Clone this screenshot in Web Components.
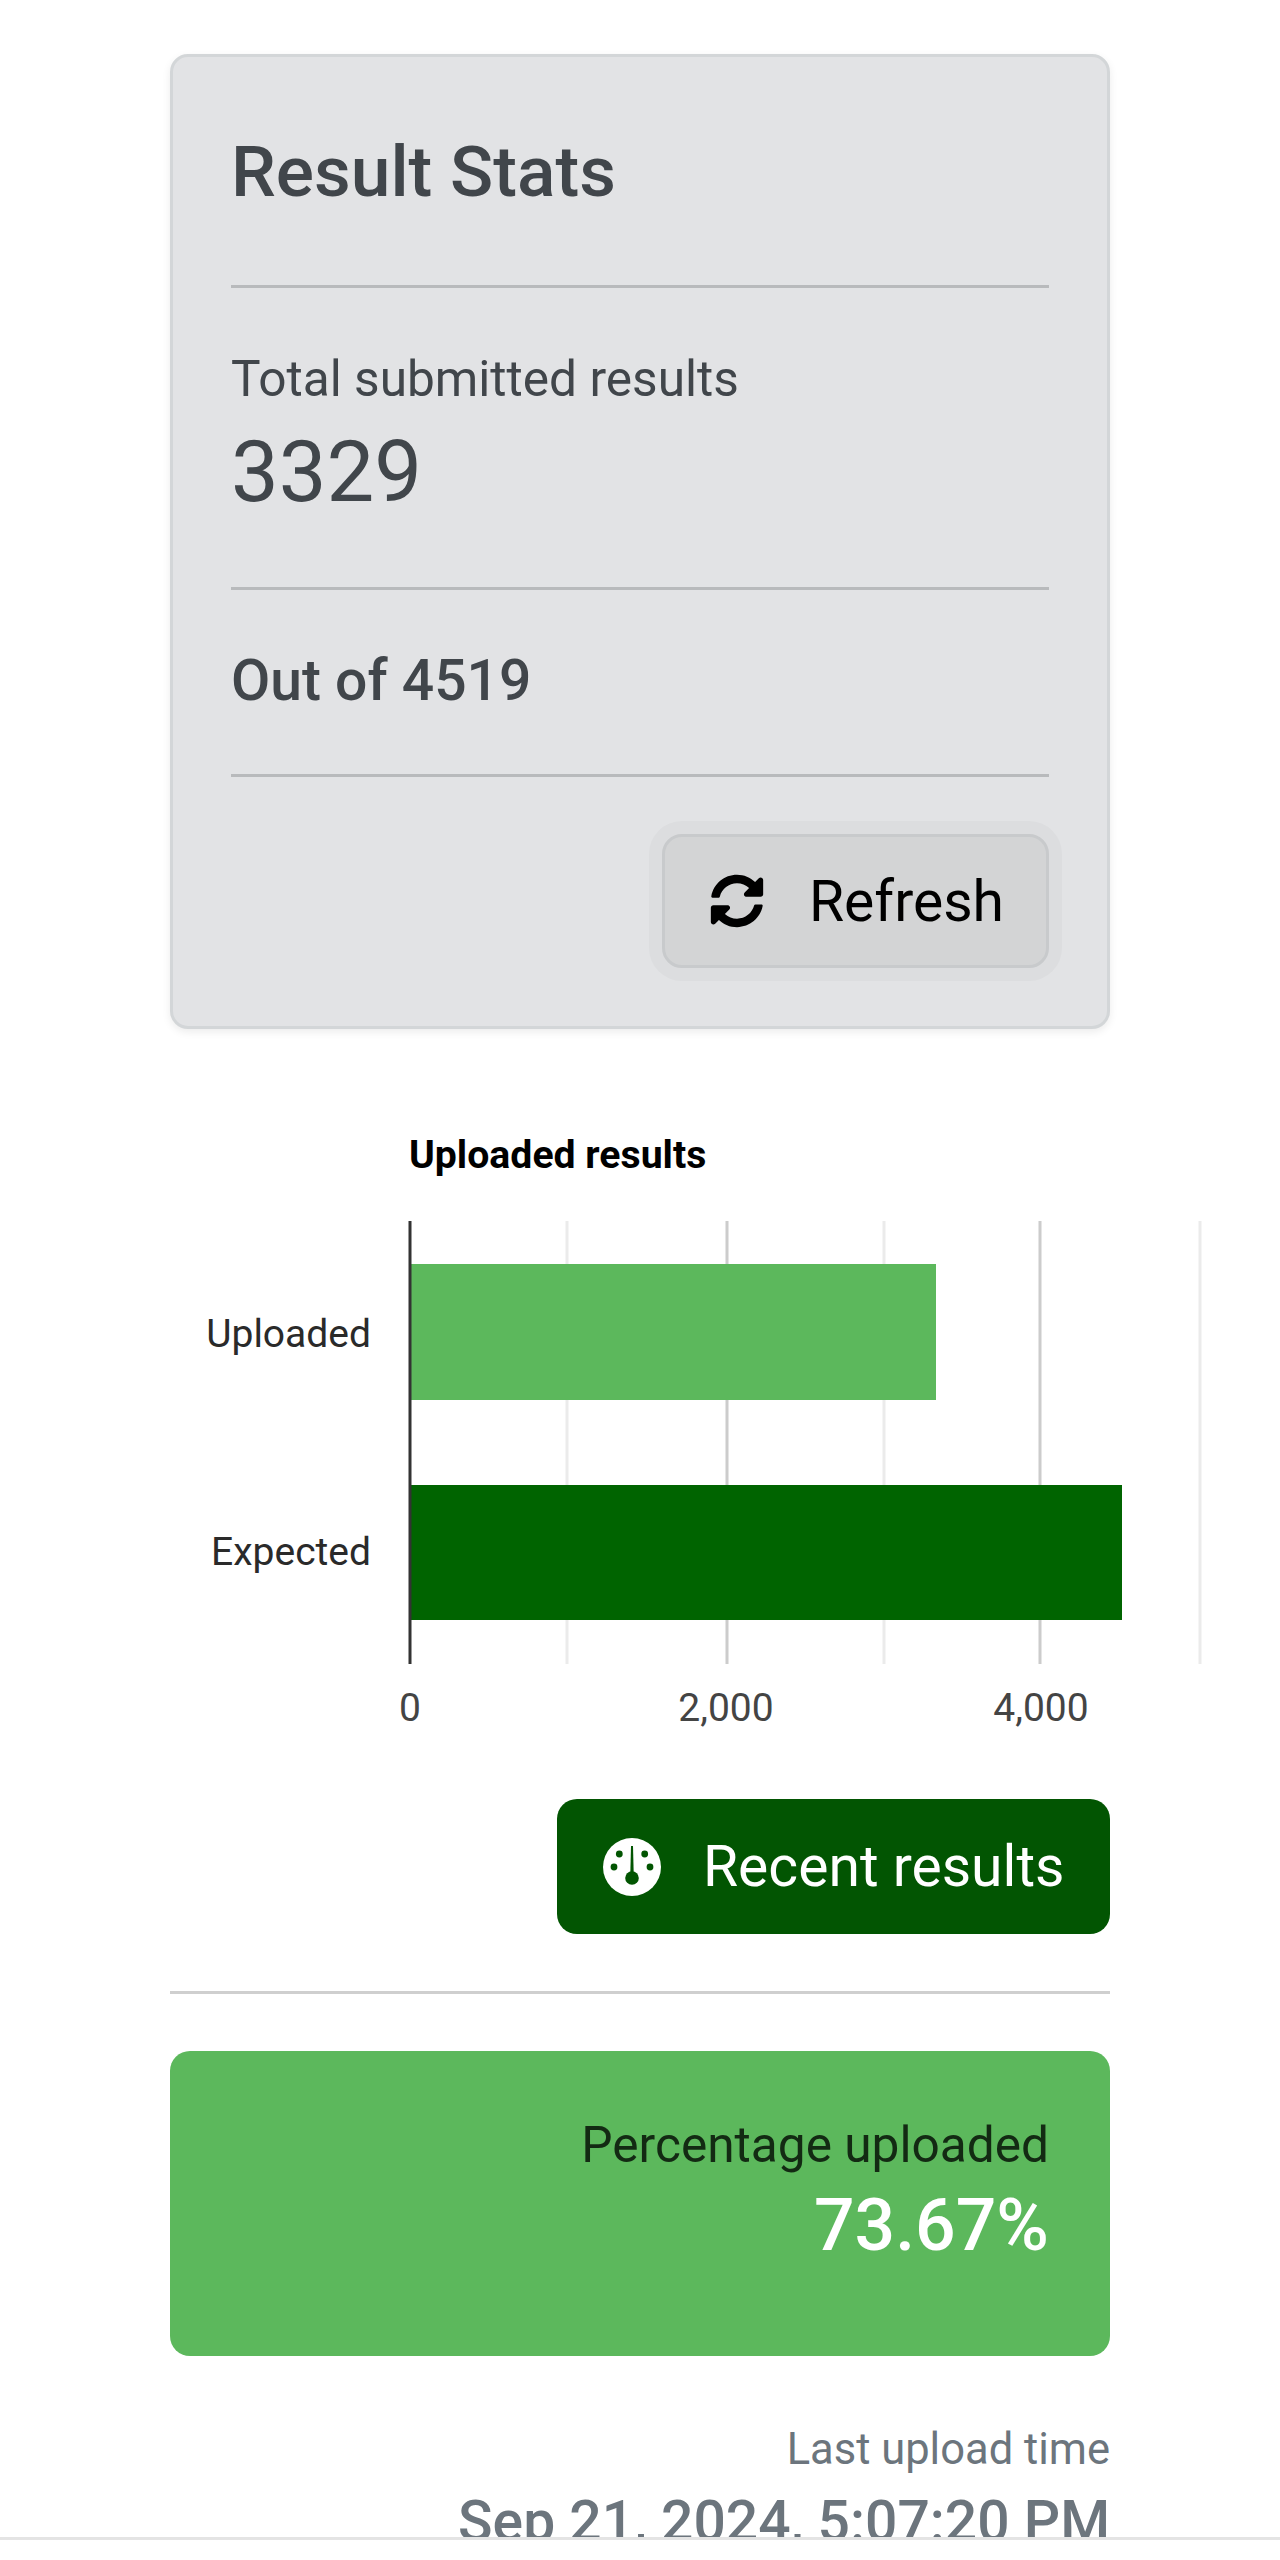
<!DOCTYPE html>
<html>
<head>
<meta charset="utf-8">
<title>Result Stats</title>
<style>
  html, body { margin: 0; padding: 0; background: #fff; }
  body { font-family: Roboto, "Liberation Sans", sans-serif; height: 2560px; overflow: hidden; }
  main { display: block; width: 940px; margin-left: 170px; padding-top: 54px; }
</style>
</head>
<body>
<main>
  <stat-card></stat-card>
  <upload-chart></upload-chart>
  <recent-button>Recent results</recent-button>
  <percent-box label="Percentage uploaded" value="73.67%"></percent-box>
  <last-upload label="Last upload time" value="Sep 21, 2024, 5:07:20 PM"></last-upload>
</main>
<bottom-bar></bottom-bar>

<script>
class StatCard extends HTMLElement {
  constructor() {
    super();
    this.attachShadow({ mode: 'open' });
  }
  connectedCallback() {
    this.shadowRoot.innerHTML = `
      <style>
        :host {
          display: block;
          box-sizing: border-box;
          height: 975px;
          padding: 57px 58px 0;
          background: #e2e3e5;
          border: 3px solid #d3d6d8;
          border-radius: 18px;
          box-shadow: 0 3px 9px rgba(0, 0, 0, 0.08);
          color: #41464b;
        }
        h3 { margin: 0 0 57px; padding-top: 2px; font-size: 71.3px; font-weight: 500; line-height: 112px; }
        hr { margin: 0; height: 3px; border: 0; background: #b8babc; }
        .label { margin-top: 55px; font-size: 49.6px; line-height: 72px; }
        .num { margin-top: 7px; font-size: 85px; line-height: 100px; }
        .out { margin-top: 48px; font-size: 57px; font-weight: 500; line-height: 86px; }
        .actions { display: flex; justify-content: flex-end; margin-top: 57px; }
        button {
          display: flex;
          align-items: center;
          box-sizing: border-box;
          height: 134px;
          width: 387px;
          padding: 0 0 0 45px;
          font: 400 57px Roboto, sans-serif;
          color: #000;
          background: #d3d4d5;
          border: 3px solid #c8cacc;
          border-radius: 20px;
          box-shadow: 0 0 0 13px #dcdddf;
        }
        svg { width: 54px; height: 54px; margin-right: 45px; flex: none; }
      </style>
      <h3>Result Stats</h3>
      <hr>
      <div class="label">Total submitted results</div>
      <div class="num">3329</div>
      <hr style="margin-top:65px">
      <div class="out">Out of 4519</div>
      <hr style="margin-top:50px">
      <div class="actions">
        <button>
          <svg viewBox="0 0 512 512"><path fill="#000" d="M370.72 133.28C339.458 104.008 298.888 87.962 255.848 88c-77.458.068-144.328 53.178-162.791 126.85-1.344 5.363-6.122 9.15-11.651 9.15H24.103c-7.498 0-13.194-6.807-11.807-14.176C33.933 94.924 134.813 8 256 8c66.448 0 126.791 26.136 171.315 68.685L463.03 40.97C478.149 25.851 504 36.559 504 57.941V192c0 13.255-10.745 24-24 24H345.941c-21.382 0-32.09-25.851-16.971-40.971l41.75-41.749zM32 296h134.059c21.382 0 32.09 25.851 16.971 40.971l-41.75 41.75c31.262 29.273 71.835 45.319 114.876 45.28 77.418-.07 144.315-53.144 162.787-126.849 1.344-5.363 6.122-9.15 11.651-9.15h57.304c7.498 0 13.194 6.807 11.807 14.176C478.067 417.076 377.187 504 256 504c-66.448 0-126.791-26.136-171.315-68.685L48.97 471.03C33.851 486.149 8 475.441 8 454.059V320c0-13.255 10.745-24 24-24z"/></svg>
          <span>Refresh</span>
        </button>
      </div>`;
  }
}

// chart coordinates are page coordinates minus (170, 1120)
class UploadChart extends HTMLElement {
  constructor() {
    super();
    this.attachShadow({ mode: 'open' });
  }
  connectedCallback() {
    this.shadowRoot.innerHTML = `
      <style>
        :host { display: block; height: 640px; margin-top: 91px; width: 1060px; }
        svg { display: block; }
        text { font-family: Roboto, sans-serif; }
      </style>
      <svg width="1060" height="640" viewBox="0 0 1060 640">
        <text x="239" y="48" font-size="39.2" font-weight="700" fill="#000">Uploaded results</text>
        <g stroke-width="3">
          <line x1="397" y1="101" x2="397" y2="544" stroke="#ebebeb"/>
          <line x1="557" y1="101" x2="557" y2="544" stroke="#cccccc"/>
          <line x1="714" y1="101" x2="714" y2="544" stroke="#ebebeb"/>
          <line x1="870" y1="101" x2="870" y2="544" stroke="#cccccc"/>
          <line x1="1030" y1="101" x2="1030" y2="544" stroke="#ebebeb"/>
        </g>
        <rect x="241" y="144" width="525" height="136" fill="#5cb85c"/>
        <rect x="241" y="365" width="711" height="135" fill="#006400"/>
        <line x1="240" y1="101" x2="240" y2="544" stroke="#333" stroke-width="3"/>
        <g font-size="39" fill="#2a2a2a" text-anchor="end">
          <text x="201" y="227">Uploaded</text>
          <text x="201" y="445">Expected</text>
        </g>
        <g font-size="39" fill="#444" text-anchor="middle">
          <text x="240" y="601">0</text>
          <text x="556" y="601">2,000</text>
          <text x="871" y="601">4,000</text>
        </g>
      </svg>`;
  }
}

class RecentButton extends HTMLElement {
  constructor() {
    super();
    this.attachShadow({ mode: 'open' });
  }
  connectedCallback() {
    this.shadowRoot.innerHTML = `
      <style>
        :host {
          display: block;
          margin-top: 39px;
          padding-bottom: 57px;
          border-bottom: 3px solid #cfcfcf;
        }
        .row { display: flex; justify-content: flex-end; }
        button {
          display: flex;
          align-items: center;
          box-sizing: border-box;
          width: 553px;
          height: 135px;
          padding: 0 0 0 46px;
          font: 400 57px Roboto, sans-serif;
          color: #fff;
          background: #025502;
          border: 0;
          border-radius: 20px;
        }
        svg { width: 58px; height: 58px; margin-right: 42px; flex: none; }
      </style>
      <div class="row">
        <button>
          <svg viewBox="-29 -29 58 58">
            <circle r="29" fill="#fff"/>
            <g fill="#025502">
              <circle cx="-12.7" cy="-13" r="3.4"/>
              <circle cx="12.7" cy="-13" r="3.4"/>
              <circle cx="-18" cy="0" r="3.4"/>
              <circle cx="18" cy="0" r="3.4"/>
              <path d="M-1 -21H1L1.8 11H-1.8Z"/>
              <circle cx="0" cy="11" r="6.8"/>
            </g>
          </svg>
          <span><slot></slot></span>
        </button>
      </div>`;
  }
}

class PercentBox extends HTMLElement {
  constructor() {
    super();
    this.attachShadow({ mode: 'open' });
  }
  connectedCallback() {
    this.shadowRoot.innerHTML = `
      <style>
        :host {
          display: block;
          box-sizing: border-box;
          height: 305px;
          margin-top: 57px;
          padding: 58px 61px 0 0;
          background: #5cb85c;
          border-radius: 20px;
          text-align: right;
        }
        .label { font-size: 49.6px; line-height: 72px; color: #132a13; }
        .value { margin-top: 2px; font-size: 71.5px; font-weight: 500; line-height: 86px; color: #fff; }
      </style>
      <div class="label">${this.getAttribute('label')}</div>
      <div class="value">${this.getAttribute('value')}</div>`;
  }
}

class LastUpload extends HTMLElement {
  constructor() {
    super();
    this.attachShadow({ mode: 'open' });
  }
  connectedCallback() {
    this.shadowRoot.innerHTML = `
      <style>
        :host { display: block; margin-top: 58px; text-align: right; color: #6c757d; }
        .label { font-size: 43.5px; line-height: 72px; }
        .value { font-size: 57px; font-weight: 500; line-height: 72px; white-space: nowrap; }
      </style>
      <div class="label">${this.getAttribute('label')}</div>
      <div class="value">${this.getAttribute('value')}</div>`;
  }
}

// white strip along the window's bottom edge, covers the page text
class BottomBar extends HTMLElement {
  constructor() {
    super();
    this.attachShadow({ mode: 'open' });
    this.shadowRoot.innerHTML = `
      <style>
        :host {
          display: block;
          position: fixed;
          left: 0; right: 0; bottom: 0;
          height: 20px;
          background: #fff;
          border-top: 3px solid #e4e4e4;
        }
      </style>`;
  }
}

customElements.define('stat-card', StatCard);
customElements.define('upload-chart', UploadChart);
customElements.define('recent-button', RecentButton);
customElements.define('percent-box', PercentBox);
customElements.define('last-upload', LastUpload);
customElements.define('bottom-bar', BottomBar);
</script>
</body>
</html>
